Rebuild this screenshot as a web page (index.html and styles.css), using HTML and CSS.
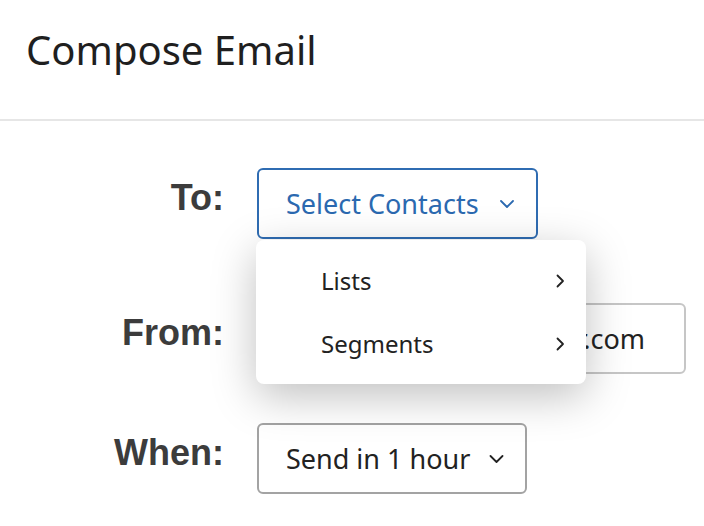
FILE: index.html
```html
<!DOCTYPE html>
<html lang="en">
<head>
    <meta charset="UTF-8">
    <meta name="viewport" content="width=device-width, initial-scale=1.0">
    <title>Compose Email</title>
    <link rel="stylesheet" href="styles.css">
</head>
<body>
    <header class="header">
        <h1>Compose Email</h1>
    </header>

    <form class="compose" action="#" method="post">
        <div class="row row-to">
            <label class="label">To:</label>
            <div class="field-wrap">
                <button type="button" class="select select-active">
                    <span>Select Contacts</span>
                    <svg class="caret" width="14" height="8" viewBox="0 0 14 8">
                        <path d="M1 1l6 6 6-6" fill="none" stroke="currentColor" stroke-width="1.8" stroke-linecap="round" stroke-linejoin="round"/>
                    </svg>
                </button>

                <!-- menu abierto -->
                <ul class="menu">
                    <li class="menu-item">
                        <span>Lists</span>
                        <svg width="10" height="14" viewBox="0 0 10 14">
                            <path d="M2.5 1.5l5.5 5.5-5.5 5.5" fill="none" stroke="currentColor" stroke-width="1.8" stroke-linecap="round" stroke-linejoin="round"/>
                        </svg>
                    </li>
                    <li class="menu-item">
                        <span>Segments</span>
                        <svg width="10" height="14" viewBox="0 0 10 14">
                            <path d="M2.5 1.5l5.5 5.5-5.5 5.5" fill="none" stroke="currentColor" stroke-width="1.8" stroke-linecap="round" stroke-linejoin="round"/>
                        </svg>
                    </li>
                </ul>
            </div>
        </div>

        <div class="row row-from">
            <label class="label">From:</label>
            <div class="text-field">noreply@qemailserver.com</div>
        </div>

        <div class="row row-when">
            <label class="label">When:</label>
            <button type="button" class="select select-when">
                <span>Send in 1 hour</span>
                <svg class="caret" width="15" height="8" viewBox="0 0 15 8">
                    <path d="M1.5 1l6 6 6-6" fill="none" stroke="currentColor" stroke-width="1.8" stroke-linecap="round" stroke-linejoin="round"/>
                </svg>
            </button>
        </div>
    </form>
</body>
</html>
```

FILE: styles.css
```css
body {
    margin: 0;
    font-family: "Noto Sans", "Open Sans", sans-serif;
    background-color: #ffffff;
    color: #222222;
    overflow: hidden;
}

.header {
    padding: 22px 26px 42px;
    border-bottom: 2px solid #e6e6e6;
}

.header h1 {
    margin: 0;
    font-size: 40px;
    font-weight: 400;
    color: #1f1f1f;
    line-height: normal;
}

.compose {
    padding-top: 47px;
}

.row {
    display: flex;
    align-items: flex-start;
    gap: 33px;
}

.row-to {
    margin-bottom: 64px;
    position: relative;
    z-index: 2;
}

.row-from {
    margin-bottom: 49px;
}

.label {
    width: 224px;
    padding-top: 9px;
    text-align: right;
    font-family: "Liberation Sans", Arial, sans-serif;
    font-weight: bold;
    font-size: 36px;
    color: #3c3c3c;
}

.field-wrap {
    position: relative;
}

.select {
    display: flex;
    align-items: center;
    gap: 21px;
    height: 71px;
    box-sizing: border-box;
    padding: 0 22px 0 27px;
    background: #ffffff;
    border: 2px solid #a3a3a3;
    border-radius: 6px;
    font-family: inherit;
    font-size: 27px;
    color: #222222;
    cursor: pointer;
}

.select-active {
    border-color: #2f6cb2;
    color: #2b69b0;
}

.select-when {
    gap: 19px;
    padding-right: 21px;
}

.text-field {
    display: flex;
    justify-content: flex-end;
    align-items: center;
    width: 429px;
    height: 71px;
    box-sizing: border-box;
    padding: 0 39px 0 27px;
    border: 2px solid #c6c6c6;
    border-radius: 6px;
    font-size: 27px;
    color: #222222;
    white-space: nowrap;
    overflow: hidden;
}

.menu {
    position: absolute;
    top: calc(100% + 1px);
    left: -1px;
    width: 330px;
    box-sizing: border-box;
    margin: 0;
    padding: 9px 0;
    list-style: none;
    background: #ffffff;
    border-radius: 8px;
    box-shadow: 0 12px 44px rgba(0, 0, 0, 0.25);
}

.menu-item {
    display: flex;
    align-items: center;
    justify-content: space-between;
    height: 63px;
    padding: 0 21px 0 65px;
    font-size: 24px;
    color: #222222;
}
```
